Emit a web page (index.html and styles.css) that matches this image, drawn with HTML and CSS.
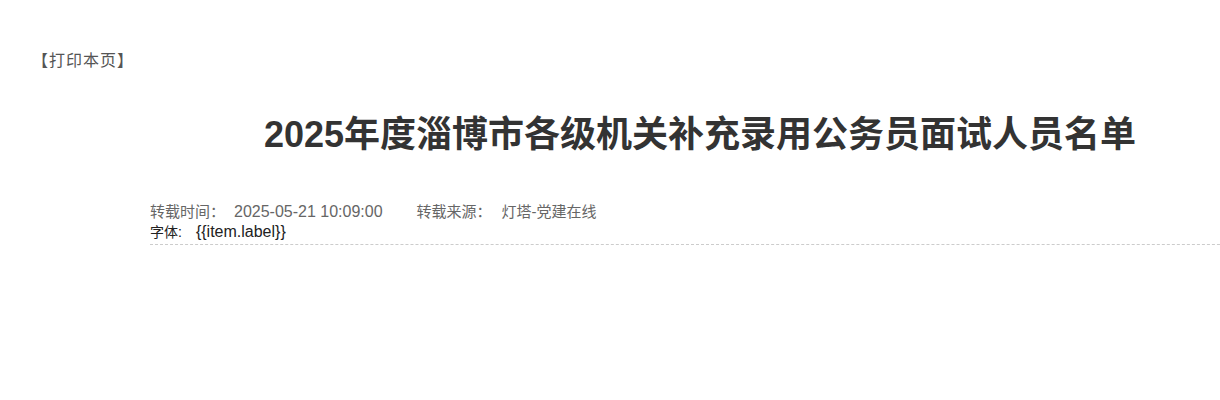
FILE: index.html
```html
<!DOCTYPE html>
<html lang="zh">
<head>
<meta charset="utf-8">
<link rel="stylesheet" href="styles.css">
</head>
<body>
<div class="toolbar"><a class="print">【打印本页】</a></div>
<div class="article">
  <h1 class="title">2025年度淄博市各级机关补充录用公务员面试人员名单</h1>
  <div class="meta">
    <div class="info"><span class="item">转载时间：<span class="val">2025-05-21 10:09:00</span></span><span class="item">转载来源：<span class="cval">灯塔-党建在线</span></span></div>
    <div class="font">字体:<span class="val lbl">{{item.label}}</span></div>
  </div>
</div>
</body>
</html>
```
FILE: styles.css
```css
html, body {
  margin: 0;
  padding: 0;
  background: #fff;
  font-family: "Liberation Sans", "Noto Sans CJK SC", sans-serif;
}
.toolbar {
  padding: 48px 0 0 32px;
  height: 22px;
}
.print {
  font-family: "Noto Sans CJK SC", sans-serif;
  font-size: 16px;
  letter-spacing: 1px;
  color: #555;
  line-height: 22px;
}
.article {
  margin-left: 150px;
  width: 1100px;
}
.title {
  margin: 40px 0 0;
  text-align: center;
  font-size: 36px;
  font-weight: bold;
  color: #333;
  line-height: 50px;
}
.meta {
  margin-top: 42px;
  border-bottom: 1px dashed #ccc;
  padding-bottom: 2px;
}
.info {
  font-size: 15px;
  color: #666;
  line-height: 20px;
}
.item {
  margin-right: 34px;
}
.val {
  font-size: 16px;
  margin-left: 9px;
}
.cval {
  margin-left: 10px;
}
.font {
  font-size: 14px;
  color: #222;
  line-height: 20px;
}
.lbl {
  margin-left: 14px;
}
```
